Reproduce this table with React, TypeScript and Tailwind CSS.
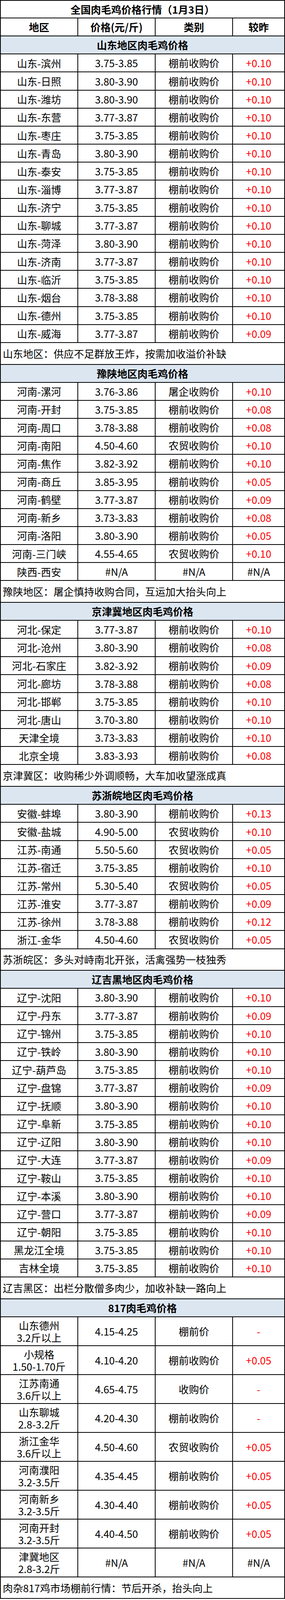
import React from "react";

type Row = [string, string, string, string];
type Section = { title: string; rows: Row[]; note: string; tall?: boolean };

const P = "棚前收购价";
const N = "农贸收购价";

const sections: Section[] = [
  {
    title: "山东地区肉毛鸡价格",
    rows: [
      ["山东-滨州", "3.75-3.85", P, "+0.10"],
      ["山东-日照", "3.80-3.90", P, "+0.10"],
      ["山东-潍坊", "3.80-3.90", P, "+0.10"],
      ["山东-东营", "3.77-3.87", P, "+0.10"],
      ["山东-枣庄", "3.75-3.85", P, "+0.10"],
      ["山东-青岛", "3.80-3.90", P, "+0.10"],
      ["山东-泰安", "3.75-3.85", P, "+0.10"],
      ["山东-淄博", "3.77-3.87", P, "+0.10"],
      ["山东-济宁", "3.75-3.85", P, "+0.10"],
      ["山东-聊城", "3.77-3.87", P, "+0.10"],
      ["山东-菏泽", "3.80-3.90", P, "+0.10"],
      ["山东-济南", "3.77-3.87", P, "+0.10"],
      ["山东-临沂", "3.75-3.85", P, "+0.10"],
      ["山东-烟台", "3.78-3.88", P, "+0.10"],
      ["山东-德州", "3.75-3.85", P, "+0.10"],
      ["山东-威海", "3.77-3.87", P, "+0.09"],
    ],
    note: "山东地区：供应不足群放王炸，按需加收溢价补缺",
  },
  {
    title: "豫陕地区肉毛鸡价格",
    rows: [
      ["河南-漯河", "3.76-3.86", "屠企收购价", "+0.10"],
      ["河南-开封", "3.75-3.85", P, "+0.08"],
      ["河南-周口", "3.78-3.88", P, "+0.08"],
      ["河南-南阳", "4.50-4.60", N, "+0.10"],
      ["河南-焦作", "3.82-3.92", P, "+0.10"],
      ["河南-商丘", "3.85-3.95", P, "+0.05"],
      ["河南-鹤壁", "3.77-3.87", P, "+0.09"],
      ["河南-新乡", "3.73-3.83", P, "+0.08"],
      ["河南-洛阳", "3.80-3.90", P, "+0.05"],
      ["河南-三门峡", "4.55-4.65", N, "+0.10"],
      ["陕西-西安", "#N/A", "#N/A", "#N/A"],
    ],
    note: "豫陕地区：屠企慎持收购合同，互运加大抬头向上",
  },
  {
    title: "京津冀地区肉毛鸡价格",
    rows: [
      ["河北-保定", "3.77-3.87", P, "+0.10"],
      ["河北-沧州", "3.80-3.90", P, "+0.08"],
      ["河北-石家庄", "3.82-3.92", P, "+0.09"],
      ["河北-廊坊", "3.78-3.88", P, "+0.08"],
      ["河北-邯郸", "3.75-3.85", P, "+0.10"],
      ["河北-唐山", "3.70-3.80", P, "+0.10"],
      ["天津全境", "3.73-3.83", P, "+0.10"],
      ["北京全境", "3.83-3.93", P, "+0.08"],
    ],
    note: "京津冀区：收购稀少外调顺畅，大车加收望涨成真",
  },
  {
    title: "苏浙皖地区肉毛鸡价格",
    rows: [
      ["安徽-蚌埠", "3.80-3.90", P, "+0.13"],
      ["安徽-盐城", "4.90-5.00", N, "+0.10"],
      ["江苏-南通", "5.50-5.60", N, "+0.05"],
      ["江苏-宿迁", "3.75-3.85", P, "+0.10"],
      ["江苏-常州", "5.30-5.40", N, "+0.05"],
      ["江苏-淮安", "3.77-3.87", P, "+0.09"],
      ["江苏-徐州", "3.78-3.88", P, "+0.12"],
      ["浙江-金华", "4.50-4.60", N, "+0.05"],
    ],
    note: "苏浙皖区：多头对峙南北开张，活禽强势一枝独秀",
  },
  {
    title: "辽吉黑地区肉毛鸡价格",
    rows: [
      ["辽宁-沈阳", "3.80-3.90", P, "+0.10"],
      ["辽宁-丹东", "3.77-3.87", P, "+0.09"],
      ["辽宁-锦州", "3.75-3.85", P, "+0.10"],
      ["辽宁-铁岭", "3.80-3.90", P, "+0.10"],
      ["辽宁-葫芦岛", "3.75-3.85", P, "+0.10"],
      ["辽宁-盘锦", "3.77-3.87", P, "+0.09"],
      ["辽宁-抚顺", "3.80-3.90", P, "+0.10"],
      ["辽宁-阜新", "3.75-3.85", P, "+0.10"],
      ["辽宁-辽阳", "3.80-3.90", P, "+0.10"],
      ["辽宁-大连", "3.77-3.87", P, "+0.09"],
      ["辽宁-鞍山", "3.75-3.85", P, "+0.10"],
      ["辽宁-本溪", "3.80-3.90", P, "+0.10"],
      ["辽宁-营口", "3.77-3.87", P, "+0.09"],
      ["辽宁-朝阳", "3.75-3.85", P, "+0.10"],
      ["黑龙江全境", "3.75-3.85", P, "+0.10"],
      ["吉林全境", "3.75-3.85", P, "+0.10"],
    ],
    note: "辽吉黑区：出栏分散僧多肉少，加收补缺一路向上",
  },
  {
    title: "817肉毛鸡价格",
    tall: true,
    rows: [
      ["山东德州\n3.2斤以上", "4.15-4.25", "棚前价", "-"],
      ["小规格\n1.50-1.70斤", "4.10-4.20", P, "+0.05"],
      ["江苏南通\n3.6斤以上", "4.65-4.75", "收购价", "-"],
      ["山东聊城\n2.8-3.2斤", "4.20-4.30", P, "-"],
      ["浙江金华\n3.6斤以上", "4.50-4.60", N, "+0.05"],
      ["河南濮阳\n3.2-3.5斤", "4.35-4.45", P, "+0.05"],
      ["河南新乡\n3.2-3.5斤", "4.30-4.40", P, "+0.05"],
      ["河南开封\n3.2-3.5斤", "4.40-4.50", P, "+0.05"],
      ["津冀地区\n2.8-3.2斤", "#N/A", "#N/A", "#N/A"],
    ],
    note: "肉杂817鸡市场棚前行情：节后开杀，抬头向上",
  },
];

const cell = "flex items-center justify-center text-center border-r-2 border-black";

const DataRow = ({ row, tall }: { row: Row; tall?: boolean }) => {
  const [area, price, kind, diff] = row;
  const red = diff !== "#N/A";
  return (
    <div className={`flex border-b-2 border-black ${tall ? "h-[74px]" : "h-[46.17px]"}`}>
      <div className={`${cell} w-[198px] whitespace-pre-line leading-[31px]`}>{area}</div>
      <div className={`${cell} w-[198px]`}>{price}</div>
      <div className={`${cell} w-[198px]`}>{kind}</div>
      <div className={`flex flex-1 items-center justify-center ${red ? "text-[#ff0000]" : ""}`}>{diff}</div>
    </div>
  );
};

export default function App() {
  return (
    <div
      className="w-[729px] bg-white text-[26px] leading-none text-black"
      style={{ fontFamily: '"Noto Sans CJK SC", "Noto Sans", sans-serif' }}
    >
      <div className="border-x-2 border-t-2 border-black">
        <div className="flex h-[45px] items-center justify-center border-b-2 border-black font-bold">
          全国肉毛鸡价格行情（1月3日）
        </div>
        <div className="flex h-[46.17px] border-b-2 border-black font-bold">
          <div className={`${cell} w-[198px]`}>地区</div>
          <div className={`${cell} w-[198px]`}>价格(元/斤)</div>
          <div className={`${cell} w-[198px]`}>类别</div>
          <div className="flex flex-1 items-center justify-center">较昨</div>
        </div>
        {sections.map((s) => (
          <div key={s.title}>
            <div className="flex h-[46.17px] items-center justify-center border-b-2 border-black bg-[#dce6f1] font-bold">
              {s.title}
            </div>
            {s.rows.map((r) => (
              <DataRow key={r[0]} row={r} tall={s.tall} />
            ))}
            <div className="flex h-[55.7px] items-center border-b-2 border-black pl-[5px]">{s.note}</div>
          </div>
        ))}
      </div>
    </div>
  );
}
